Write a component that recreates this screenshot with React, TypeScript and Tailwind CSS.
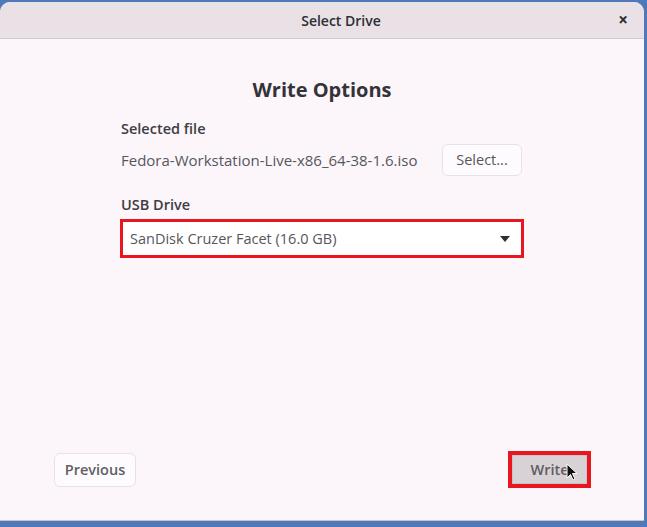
export default function App() {
  return (
    <div
      className="w-[647px] h-[527px] bg-[#4f79bb] pt-[2px] overflow-hidden"
      style={{ fontFamily: '"Open Sans", "Noto Sans", sans-serif' }}
    >
      <div className="w-[644px] h-[519px] flex flex-col bg-[#fcf6fb] rounded-t-[10px] overflow-hidden border-b border-[#c9c3cc]">
        {/* header bar */}
        <div className="h-[37px] shrink-0 relative flex items-center justify-center bg-[#e9e1e6] border-b border-[#d2c9cf]">
          <span className="text-[14px] font-semibold text-[#2e2e33] pl-[38px]">Select Drive</span>
          <span className="absolute right-[16px] top-[9px] text-[17px] font-bold text-[#2e2e33] leading-none">×</span>
        </div>

        <div className="flex-1 flex flex-col px-[54px]">
          <h1 className="text-center text-[20px] font-bold text-[#333338] mt-[37px] leading-[28px]">
            Write Options
          </h1>

          <div className="w-[404px] mx-auto mt-[15px] flex flex-col">
            <div className="text-[14.5px] font-semibold text-[#3d3d42] pl-[1px] leading-[20px]">Selected file</div>
            <div className="flex items-center justify-between mt-[5px]">
              <span className="text-[15px] text-[#56565c] pl-[1px]">Fedora-Workstation-Live-x86_64-38-1.6.iso</span>
              <button className="w-[80px] h-[32px] mr-[2px] rounded-[6px] border border-[#ecdfe9] bg-[#fefbfe] text-[14.5px] text-[#56565c]">
                Select...
              </button>
            </div>

            <div className="text-[14.5px] font-semibold text-[#3d3d42] pl-[1px] mt-[19px] leading-[20px]">USB Drive</div>
            <div className="mt-[4px] h-[39px] border-[3px] border-[#e8171f] bg-white flex items-center justify-between pl-[7px] pr-[11px]">
              <span className="text-[14.5px] text-[#56565c]">SanDisk Cruzer Facet (16.0 GB)</span>
              <svg width="10" height="6" viewBox="0 0 10 6">
                <path d="M0 0 L10 0 L5 6 Z" fill="#2e2e33" />
              </svg>
            </div>
          </div>

          <div className="mt-auto mb-[32px] flex items-center justify-between">
            <button className="w-[82px] h-[34px] rounded-[6px] border border-[#ecdfe9] bg-[#fefbfe] text-[14.5px] font-semibold text-[#5f5f65]">
              Previous
            </button>
            <div className="relative mr-[-1px] w-[83px] h-[37px] border-[4px] border-[#e8171f] flex">
              <div className="flex-1 bg-[#d8d1d6] border border-[#c9c1c7] flex items-center justify-center text-[14.5px] font-semibold text-[#5f5d63]">
                Write
              </div>
              <svg className="absolute left-[54px] top-[8px]" width="12" height="18" viewBox="0 0 12 18">
                <path d="M1 1 L1 15 L4.5 11.5 L7 17 L9 16 L6.5 10.5 L11 10.5 Z" fill="#111" stroke="#fff" strokeWidth="1" />
              </svg>
            </div>
          </div>
        </div>
      </div>
    </div>
  );
}
